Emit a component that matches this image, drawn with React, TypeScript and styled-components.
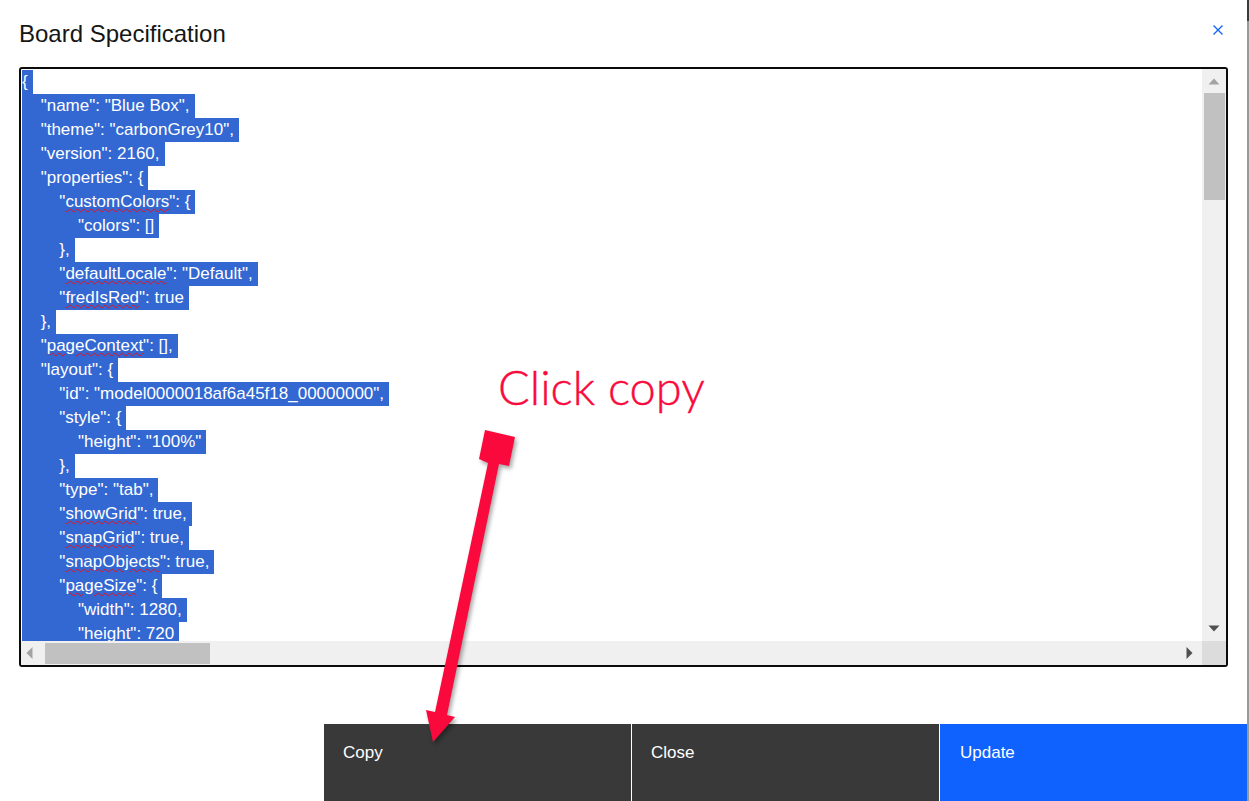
import React from 'react';
import styled, { createGlobalStyle } from 'styled-components';

const Colors = {
  ink: '#161616',
  blue: '#0f62fe',
  selection: '#3367d1',
  dark: '#393939',
  track: '#f0f0f0',
  thumb: '#c1c1c1',
  arrow: '#fa0a3c',
};

const GlobalStyle = createGlobalStyle`
  html, body {
    margin: 0;
    padding: 0;
    background: #fff;
    overflow: hidden;
  }
  body {
    font-family: "Liberation Sans", Arial, sans-serif;
  }
`;

const Page = styled.div`
  position: relative;
  display: flex;
  width: 1249px;
  height: 801px;
  overflow: hidden;
`;

const Modal = styled.div`
  flex: 1;
  display: flex;
  flex-direction: column;
  min-width: 0;
`;

const EdgeStrip = styled.div`
  width: 2px;
  background: linear-gradient(#3a3a3a 0 21px, #999 21px);
`;

const Header = styled.div`
  height: 67px;
  display: flex;
  justify-content: space-between;
  padding: 20px 24px 0 19px;
  box-sizing: border-box;
`;

const Title = styled.h3`
  margin: 0;
  font-size: 24px;
  font-weight: 400;
  line-height: 28px;
  color: ${Colors.ink};
`;

const CloseIcon = styled.svg`
  width: 10px;
  height: 10px;
  margin-top: 5px;
  stroke: ${Colors.blue};
  stroke-width: 1.3;
  fill: none;
`;

const Editor = styled.div`
  width: 1209px;
  height: 600px;
  margin-left: 19px;
  box-sizing: border-box;
  border: 2px solid #0b0b0b;
  border-radius: 3px;
  display: grid;
  grid-template-columns: 1fr 24px;
  grid-template-rows: 1fr 24px;
  overflow: hidden;
`;

const Code = styled.div`
  padding: 1px 0 0 1px;
  overflow: hidden;
  font-size: 17px;
  line-height: 24px;
  color: #fff;
`;

const Line = styled.div<{ $level: number }>`
  width: fit-content;
  height: 24px;
  padding-left: ${({ $level }) => $level * 18.67}px;
  padding-right: 5px;
  background: ${Colors.selection};
  white-space: pre;
`;

const Misspelt = styled.span`
  text-decoration: underline wavy #e8101c 1.4px;
  text-underline-offset: 1px;
`;

const VerticalBar = styled.div`
  background: ${Colors.track};
  display: flex;
  flex-direction: column;
  align-items: center;
  padding: 9px 0 7px;
  box-sizing: border-box;
`;

const HorizontalBar = styled.div`
  background: ${Colors.track};
  display: flex;
  align-items: center;
  padding: 0 9px 0 5px;
`;

const Corner = styled.div`
  background: #dcdcdc;
`;

const Arrow = styled.svg`
  flex: none;
  width: 12px;
  height: 12px;
`;

const VerticalThumb = styled.div`
  width: 21px;
  height: 107px;
  margin: 3px 0 auto 1px;
  background: ${Colors.thumb};
`;

const HorizontalThumb = styled.div`
  width: 165px;
  height: 21px;
  margin: 0 auto 0 7px;
  background: ${Colors.thumb};
`;

const Footer = styled.div`
  margin: auto 0 0 324px;
  height: 77px;
  display: flex;
`;

const ActionButton = styled.button<{ $primary?: boolean }>`
  display: flex;
  align-items: flex-start;
  width: ${({ $primary }) => ($primary ? '307px' : '308px')};
  height: 100%;
  padding: 20px 0 0 ${({ $primary }) => ($primary ? '20px' : '19px')};
  border: 0;
  border-right: ${({ $primary }) => ($primary ? '0' : '1px solid #fff')};
  background: ${({ $primary }) => ($primary ? Colors.blue : Colors.dark)};
  color: #fff;
  font: 17px/18px "Liberation Sans", Arial, sans-serif;
  box-sizing: border-box;
`;

const Annotation = styled.div`
  position: absolute;
  left: 498px;
  top: 357px;
  font-family: Lato, "Open Sans", sans-serif;
  font-weight: 300;
  font-size: 47px;
  line-height: 60px;
  color: ${Colors.arrow};
  -webkit-text-stroke: 0.4px ${Colors.arrow};
  white-space: nowrap;
`;

const Pointer = styled.svg`
  position: absolute;
  left: 420px;
  top: 425px;
  width: 105px;
  height: 330px;
  fill: ${Colors.arrow};
  filter: drop-shadow(2px 3px 2px rgba(0, 0, 0, 0.35));
`;

type CodeLine = [number, string, string?, string?];

const codeLines: CodeLine[] = [
  [0, '{'],
  [1, '"name": "Blue Box",'],
  [1, '"theme": "carbonGrey10",'],
  [1, '"version": 2160,'],
  [1, '"properties": {'],
  [2, '"', 'customColors', '": {'],
  [3, '"colors": []'],
  [2, '},'],
  [2, '"', 'defaultLocale', '": "Default",'],
  [2, '"', 'fredIsRed', '": true'],
  [1, '},'],
  [1, '"', 'pageContext', '": [],'],
  [1, '"layout": {'],
  [2, '"id": "model0000018af6a45f18_00000000",'],
  [2, '"style": {'],
  [3, '"height": "100%"'],
  [2, '},'],
  [2, '"type": "tab",'],
  [2, '"', 'showGrid', '": true,'],
  [2, '"', 'snapGrid', '": true,'],
  [2, '"', 'snapObjects', '": true,'],
  [2, '"', 'pageSize', '": {'],
  [3, '"width": 1280,'],
  [3, '"height": 720'],
];

const App: React.FC = () => (
  <Page>
    <GlobalStyle />
    <Modal>
      <Header>
        <Title>Board Specification</Title>
        <CloseIcon viewBox="0 0 10 10">
          <path d="M0.5 0.5 L9.5 9.5 M9.5 0.5 L0.5 9.5" />
        </CloseIcon>
      </Header>
      <Editor>
        <Code>
          {codeLines.map(([level, before, word, after], i) => (
            <Line key={i} $level={level}>
              {before}
              {word && <Misspelt>{word}</Misspelt>}
              {after}
            </Line>
          ))}
        </Code>
        <VerticalBar>
          <Arrow viewBox="0 0 12 12">
            <path d="M0.5 6.5 L6 0.5 L11.5 6.5 Z" fill="#a3a3a3" />
          </Arrow>
          <VerticalThumb />
          <Arrow viewBox="0 0 12 12">
            <path d="M0.5 3.5 L11.5 3.5 L6 9.5 Z" fill="#505050" />
          </Arrow>
        </VerticalBar>
        <HorizontalBar>
          <Arrow viewBox="0 0 12 12">
            <path d="M6.5 0 L0.5 6 L6.5 12 Z" fill="#a3a3a3" />
          </Arrow>
          <HorizontalThumb />
          <Arrow viewBox="0 0 12 12">
            <path d="M5.5 0 L11.5 6 L5.5 12 Z" fill="#505050" />
          </Arrow>
        </HorizontalBar>
        <Corner />
      </Editor>
      <Footer>
        <ActionButton>Copy</ActionButton>
        <ActionButton>Close</ActionButton>
        <ActionButton $primary>Update</ActionButton>
      </Footer>
    </Modal>
    <EdgeStrip />
    <Annotation>Click copy</Annotation>
    <Pointer viewBox="0 0 105 330">
      <path d="M65 5 L95 12 L89 41 L79 39 L27 290 L35 292 L13 317 L6 285 L15 287 L68 38 L59 34 Z" />
    </Pointer>
  </Page>
);

export default App;
